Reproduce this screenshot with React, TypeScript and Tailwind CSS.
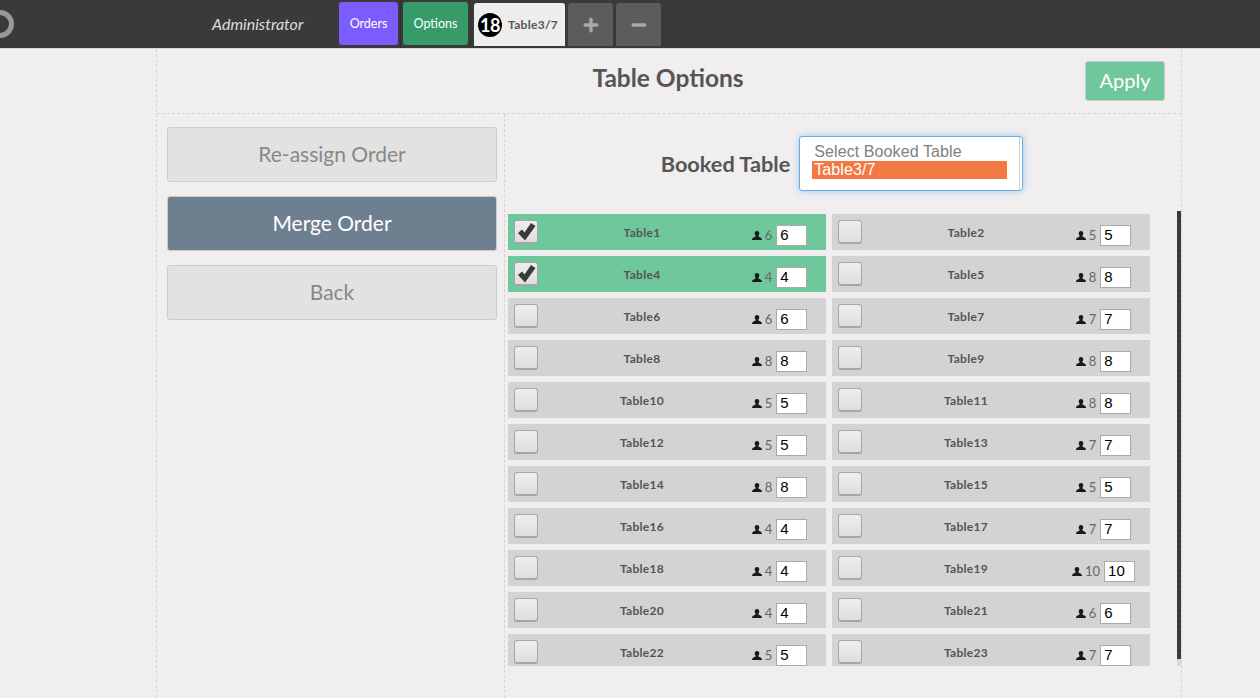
import { Minus, Plus } from "lucide-react";

const tables = [
  { name: "Table1", seats: 6, checked: true },
  { name: "Table2", seats: 5 },
  { name: "Table4", seats: 4, checked: true },
  { name: "Table5", seats: 8 },
  { name: "Table6", seats: 6 },
  { name: "Table7", seats: 7 },
  { name: "Table8", seats: 8 },
  { name: "Table9", seats: 8 },
  { name: "Table10", seats: 5 },
  { name: "Table11", seats: 8 },
  { name: "Table12", seats: 5 },
  { name: "Table13", seats: 7 },
  { name: "Table14", seats: 8 },
  { name: "Table15", seats: 5 },
  { name: "Table16", seats: 4 },
  { name: "Table17", seats: 7 },
  { name: "Table18", seats: 4 },
  { name: "Table19", seats: 10 },
  { name: "Table20", seats: 4 },
  { name: "Table21", seats: 6 },
  { name: "Table22", seats: 5 },
  { name: "Table23", seats: 7 },
];

const UserIcon = () => (
  <svg viewBox="0 0 10 9" className="h-[9px] w-[10px] fill-[#1a1a1a]">
    <path d="M5 0C6.6 0 7.3 1 7.3 2.3 7.3 3.4 6.8 4.3 6.4 4.8 6.3 5.6 7 5.9 8 6.3 9.2 6.8 10 7.4 10 9H0C0 7.4 .8 6.8 2 6.3 3 5.9 3.7 5.6 3.6 4.8 3.2 4.3 2.7 3.4 2.7 2.3 2.7 1 3.4 0 5 0Z" />
  </svg>
);

const TableRow = ({ name, seats, checked }: { name: string; seats: number; checked?: boolean }) => (
  <div className={`flex h-9 items-center ${checked ? "bg-[#6fc79c]" : "bg-[#d3d3d3]"}`}>
    <div className="ml-1.5 flex h-6 w-6 shrink-0 items-center justify-center rounded-[3px] border border-[#a6a6a6] border-b-2 bg-linear-to-b from-[#eeeeee] to-[#dedede]">
      {checked && (
        <svg viewBox="0 0 22 22" className="h-[22px] w-[22px] fill-[#3a3a3a]">
          <path d="M3 12 L7 8.5 L9.5 11.5 L16 2 L20.5 5 L10 19.5 Z" />
        </svg>
      )}
    </div>
    <div className="ml-1.5 w-[196px] shrink-0 translate-y-px text-center text-xs font-bold tracking-[0.3px] text-[#555]">{name}</div>
    <div className="flex flex-1 items-center justify-center pr-[7px] pt-1.5">
      <UserIcon />
      <span className="ml-[3px] mr-[4px] text-[13px] leading-none text-[#666]">{seats}</span>
      <input
        readOnly
        value={seats}
        className="h-[21px] w-[31px] border border-[#aaa] bg-white px-[3px] font-['Liberation_Sans'] text-[15px] text-black outline-none"
      />
    </div>
  </div>
);

export default function App() {
  return (
    <div className="h-[698px] overflow-hidden bg-[#f0eeef] font-['Lato',sans-serif]">
      <header className="flex h-[49px] items-start border-b border-[#d8d8d8] bg-[#3a3a3a]">
        <svg viewBox="0 0 14 48" className="h-12 w-3.5 shrink-0">
          <circle cx="0" cy="24" r="11.5" fill="none" stroke="#999" strokeWidth="5" />
        </svg>
        <div className="ml-[198px] mt-[14px] w-[127px] text-base italic leading-5 text-[#ddd]">Administrator</div>
        <button className="mt-0.5 h-[43px] w-[59px] rounded-[3px] bg-[#7b5cff] pt-0.5 text-[12.5px] text-white">Orders</button>
        <div className="mx-[2px] h-12 w-px bg-[#2e2e2e]" />
        <button className="mt-0.5 h-[43px] w-[65px] rounded-[3px] bg-[#369b68] pt-0.5 text-[12.5px] text-white">Options</button>
        <div className="ml-[2px] mr-[3px] h-12 w-px bg-[#2e2e2e]" />
        <div className="mt-[3px] flex h-[43px] w-[91px] items-center rounded-t-[3px] bg-[#eeeeee] pl-1">
          <span className="flex h-6 w-6 items-center justify-center rounded-full bg-black text-lg font-bold tracking-[-0.5px] text-white">18</span>
          <span className="ml-1.5 text-xs font-bold tracking-[0.3px] text-[#555]">Table3/7</span>
        </div>
        <button className="ml-[3px] mt-[3px] flex h-[43px] w-[45px] items-center justify-center rounded-t-[3px] bg-[#5c5c5c]">
          <Plus className="h-5 w-5 text-[#a8a8a8]" strokeWidth={4} />
        </button>
        <button className="ml-[3px] mt-[3px] flex h-[43px] w-[45px] items-center justify-center rounded-t-[3px] bg-[#5c5c5c]">
          <Minus className="h-5 w-5 text-[#a8a8a8]" strokeWidth={4} />
        </button>
      </header>

      <main className="ml-[156px] h-[649px] w-[1026px] border-x border-dashed border-[#d4d4d4]">
        <div className="grid h-[65px] grid-cols-[1fr_auto_1fr] items-center border-b border-dashed border-[#d4d4d4]">
          <div />
          <h1 className="-mt-[5px] -translate-x-px text-[24.5px] font-bold text-[#555]">Table Options</h1>
          <button className="-mt-[1px] mr-4 h-10 w-20 justify-self-end rounded-[3px] border border-[#c8c8c8] bg-[#6fc79c] pb-0.5 text-xl text-white">
            Apply
          </button>
        </div>

        <div className="flex h-[584px]">
          <aside className="flex w-[348px] shrink-0 flex-col gap-3.5 border-r border-dashed border-[#d4d4d4] pl-2.5 pr-[7px] pt-[13px]">
            <button className="h-[55px] rounded-[3px] border border-[#ccc] bg-[#e2e2e2] pb-0.5 text-[21px] text-[#888]">Re-assign Order</button>
            <button className="h-[55px] rounded-[3px] border border-[#ccc] bg-[#6e7f90] pb-0.5 text-[21px] text-white">Merge Order</button>
            <button className="h-[55px] rounded-[3px] border border-[#ccc] bg-[#e2e2e2] pb-0.5 text-[21px] text-[#888]">Back</button>
          </aside>

          <section className="flex-1">
            <div className="flex h-[97px] items-start justify-center gap-[9px] pr-[2px] pt-[22px]">
              <label className="mt-[14px] text-[21.7px] font-bold leading-7 text-[#555]">Booked Table</label>
              <div className="flex h-[55px] w-56 rounded-[3px] border border-[#66afe9] bg-white pl-3 pr-[2px] pt-1.5 font-['Liberation_Sans'] text-base leading-[18px] tracking-[0.1px] shadow-[0_0_6px_rgba(102,175,233,0.6)]">
                <div className="w-[195px]">
                  <div className="pl-0.5 text-[#808080]">Select Booked Table</div>
                  <div className="bg-[#f27944] pl-0.5 text-white">Table3/7</div>
                </div>
                <div className="-mt-1.5 ml-auto h-[53px] w-px bg-[#ccc]" />
              </div>
            </div>

            <div className="flex h-[455px] overflow-hidden">
              <div className="ml-[3px] grid w-[642px] grid-cols-2 content-start gap-x-1.5 gap-y-1.5 pt-[3px]">
                {tables.map((t) => (
                  <TableRow key={t.name} {...t} />
                ))}
              </div>
              <div className="ml-auto h-full w-1 bg-[#d8d8d8]">
                <div className="h-[448px] bg-[#3a3a3a]" />
              </div>
            </div>
          </section>
        </div>
      </main>
    </div>
  );
}
